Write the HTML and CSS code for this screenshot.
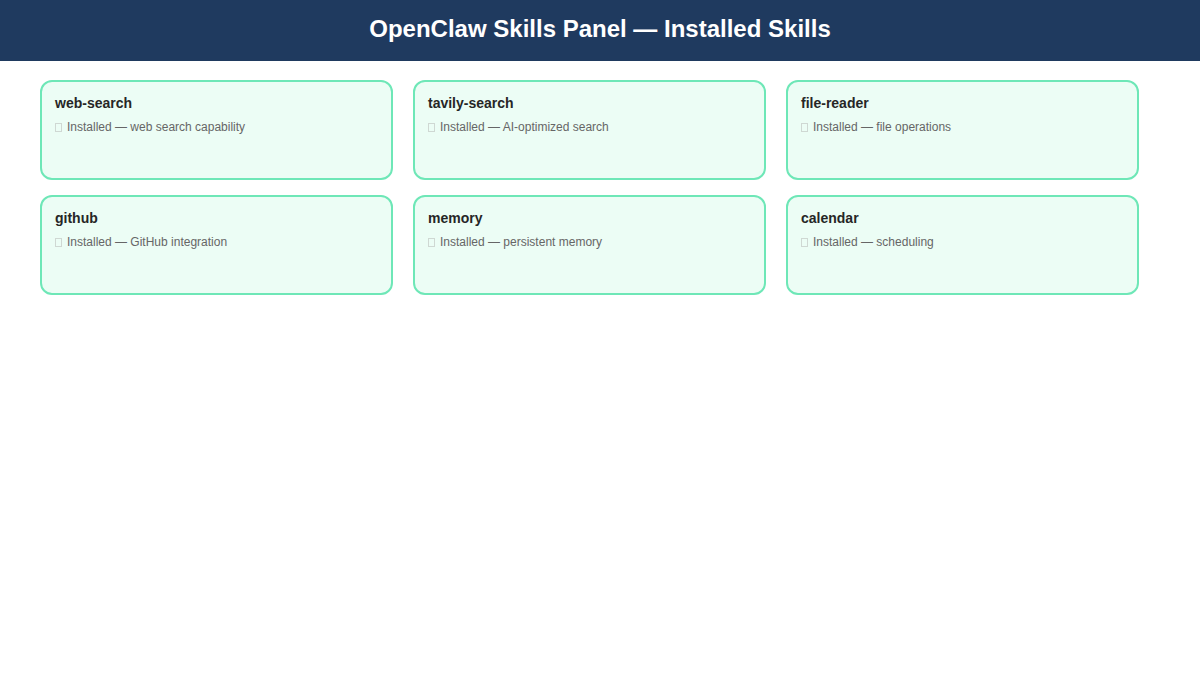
FILE: index.html
```html
<!DOCTYPE html>
<html>
<head>
<meta charset="utf-8">
<link rel="stylesheet" href="styles.css">
</head>
<body>
<header class="topbar"><h1 class="title">OpenClaw Skills Panel — Installed Skills</h1></header>
<main class="grid">
  <div class="card"><div class="name">web-search</div><div class="desc"><span class="tofu"></span>Installed — web search capability</div></div>
  <div class="card"><div class="name">tavily-search</div><div class="desc"><span class="tofu"></span>Installed — AI-optimized search</div></div>
  <div class="card"><div class="name">file-reader</div><div class="desc"><span class="tofu"></span>Installed — file operations</div></div>
  <div class="card"><div class="name">github</div><div class="desc"><span class="tofu"></span>Installed — GitHub integration</div></div>
  <div class="card"><div class="name">memory</div><div class="desc"><span class="tofu"></span>Installed — persistent memory</div></div>
  <div class="card"><div class="name">calendar</div><div class="desc"><span class="tofu"></span>Installed — scheduling</div></div>
</main>
</body>
</html>
```
FILE: styles.css
```css
html, body {
  margin: 0;
  padding: 0;
  background: #ffffff;
  font-family: "Liberation Sans", Arial, sans-serif;
}
.topbar {
  height: 61px;
  background: #1f3a5f;
  display: flex;
  align-items: center;
  justify-content: center;
}
.title {
  margin: 0 0 4px 0;
  color: #ffffff;
  font-size: 24px;
  font-weight: bold;
  line-height: 28px;
}
.grid {
  display: grid;
  grid-template-columns: repeat(3, 353px);
  column-gap: 20px;
  row-gap: 15px;
  padding: 19px 40px;
}
.card {
  box-sizing: border-box;
  height: 100px;
  background: #ecfdf5;
  border: 2px solid #6ee7b7;
  border-radius: 12px;
  padding: 13px 13px;
}
.name {
  font-size: 14px;
  font-weight: bold;
  color: #262626;
  line-height: 17px;
  margin-bottom: 8px;
}
.desc {
  font-size: 12px;
  color: #666666;
  line-height: 14px;
  display: flex;
  align-items: center;
}
.tofu {
  display: inline-block;
  box-sizing: border-box;
  width: 7px;
  height: 9px;
  border: 1px solid #cfd8d3;
  margin-right: 5px;
}
```
